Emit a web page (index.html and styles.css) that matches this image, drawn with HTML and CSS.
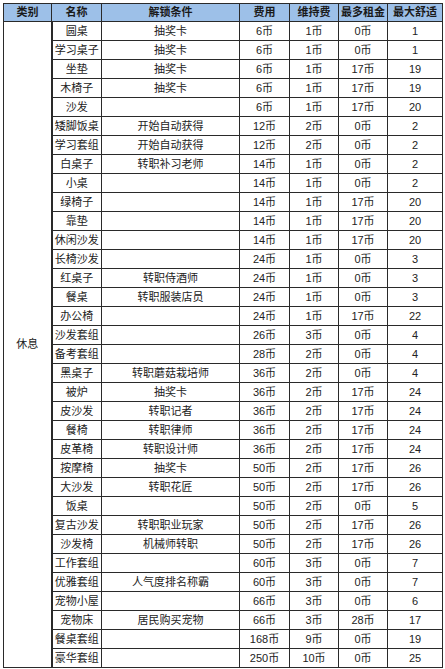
FILE: index.html
```html
<!DOCTYPE html>
<html lang="zh">
<head>
<meta charset="utf-8">
<link rel="stylesheet" href="styles.css">
</head>
<body>
<table class="tbl">
<colgroup>
<col class="c1"><col class="c2"><col class="c3"><col class="c4"><col class="c5"><col class="c6"><col class="c7">
</colgroup>
<thead>
<tr class="head"><th>类别</th><th>名称</th><th>解锁条件</th><th>费用</th><th>维持费</th><th>最多租金</th><th>最大舒适</th></tr>
</thead>
<tbody>
<tr><td class="cat" rowspan="34">休息</td><td>圆桌</td><td>抽奖卡</td><td>6币</td><td>1币</td><td>0币</td><td>1</td></tr>
<tr><td>学习桌子</td><td>抽奖卡</td><td>6币</td><td>1币</td><td>0币</td><td>1</td></tr>
<tr><td>坐垫</td><td>抽奖卡</td><td>6币</td><td>1币</td><td>17币</td><td>19</td></tr>
<tr><td>木椅子</td><td>抽奖卡</td><td>6币</td><td>1币</td><td>17币</td><td>19</td></tr>
<tr><td>沙发</td><td></td><td>6币</td><td>1币</td><td>17币</td><td>20</td></tr>
<tr><td>矮脚饭桌</td><td>开始自动获得</td><td>12币</td><td>2币</td><td>0币</td><td>2</td></tr>
<tr><td>学习套组</td><td>开始自动获得</td><td>12币</td><td>2币</td><td>0币</td><td>2</td></tr>
<tr><td>白桌子</td><td>转职补习老师</td><td>14币</td><td>1币</td><td>0币</td><td>2</td></tr>
<tr><td>小桌</td><td></td><td>14币</td><td>1币</td><td>0币</td><td>2</td></tr>
<tr><td>绿椅子</td><td></td><td>14币</td><td>1币</td><td>17币</td><td>20</td></tr>
<tr><td>靠垫</td><td></td><td>14币</td><td>1币</td><td>17币</td><td>20</td></tr>
<tr><td>休闲沙发</td><td></td><td>14币</td><td>1币</td><td>17币</td><td>20</td></tr>
<tr><td>长椅沙发</td><td></td><td>24币</td><td>1币</td><td>0币</td><td>3</td></tr>
<tr><td>红桌子</td><td>转职侍酒师</td><td>24币</td><td>1币</td><td>0币</td><td>3</td></tr>
<tr><td>餐桌</td><td>转职服装店员</td><td>24币</td><td>1币</td><td>0币</td><td>3</td></tr>
<tr><td>办公椅</td><td></td><td>24币</td><td>1币</td><td>17币</td><td>22</td></tr>
<tr><td>沙发套组</td><td></td><td>26币</td><td>3币</td><td>0币</td><td>4</td></tr>
<tr><td>备考套组</td><td></td><td>28币</td><td>2币</td><td>0币</td><td>4</td></tr>
<tr><td>黑桌子</td><td>转职蘑菇栽培师</td><td>36币</td><td>2币</td><td>0币</td><td>4</td></tr>
<tr><td>被炉</td><td>抽奖卡</td><td>36币</td><td>2币</td><td>17币</td><td>24</td></tr>
<tr><td>皮沙发</td><td>转职记者</td><td>36币</td><td>2币</td><td>17币</td><td>24</td></tr>
<tr><td>餐椅</td><td>转职律师</td><td>36币</td><td>2币</td><td>17币</td><td>24</td></tr>
<tr><td>皮革椅</td><td>转职设计师</td><td>36币</td><td>2币</td><td>17币</td><td>24</td></tr>
<tr><td>按摩椅</td><td>抽奖卡</td><td>50币</td><td>2币</td><td>17币</td><td>26</td></tr>
<tr><td>大沙发</td><td>转职花匠</td><td>50币</td><td>2币</td><td>17币</td><td>26</td></tr>
<tr><td>饭桌</td><td></td><td>50币</td><td>2币</td><td>0币</td><td>5</td></tr>
<tr><td>复古沙发</td><td>转职职业玩家</td><td>50币</td><td>2币</td><td>17币</td><td>26</td></tr>
<tr><td>沙发椅</td><td>机械师转职</td><td>50币</td><td>2币</td><td>17币</td><td>26</td></tr>
<tr><td>工作套组</td><td></td><td>60币</td><td>3币</td><td>0币</td><td>7</td></tr>
<tr><td>优雅套组</td><td>人气度排名称霸</td><td>60币</td><td>3币</td><td>0币</td><td>7</td></tr>
<tr><td>宠物小屋</td><td></td><td>66币</td><td>3币</td><td>0币</td><td>6</td></tr>
<tr><td>宠物床</td><td>居民购买宠物</td><td>66币</td><td>3币</td><td>28币</td><td>17</td></tr>
<tr><td>餐桌套组</td><td></td><td>168币</td><td>9币</td><td>0币</td><td>19</td></tr>
<tr><td>豪华套组</td><td></td><td>250币</td><td>10币</td><td>0币</td><td>25</td></tr>
</tbody>
</table>
</body>
</html>
```
FILE: styles.css
```css
html, body {
  margin: 0;
  padding: 0;
  background: #ffffff;
}
body {
  padding: 3px 0 0 3px;
  font-family: "Liberation Sans", "Noto Sans CJK SC", sans-serif;
  font-size: 11px;
  color: #222;
}
.tbl {
  border-collapse: collapse;
  table-layout: fixed;
  width: 439px;
}
.c1 { width: 48px; }
.c2 { width: 50px; }
.c3 { width: 138px; }
.c4 { width: 50px; }
.c5 { width: 49px; }
.c6 { width: 49px; }
.c7 { width: 55px; }
.tbl th, .tbl td {
  border: 1px solid #2a2a2a;
  padding: 0;
  text-align: center;
  vertical-align: middle;
  white-space: nowrap;
  overflow: hidden;
  line-height: 17px;
}
.tbl td {
  height: 18px;
}
.head th {
  background: #9dc0e8;
  font-weight: bold;
  color: #1a1a1a;
  height: 17px;
}
.tbl td.cat {
  border-right: 2px solid #2a2a2a;
}
```
